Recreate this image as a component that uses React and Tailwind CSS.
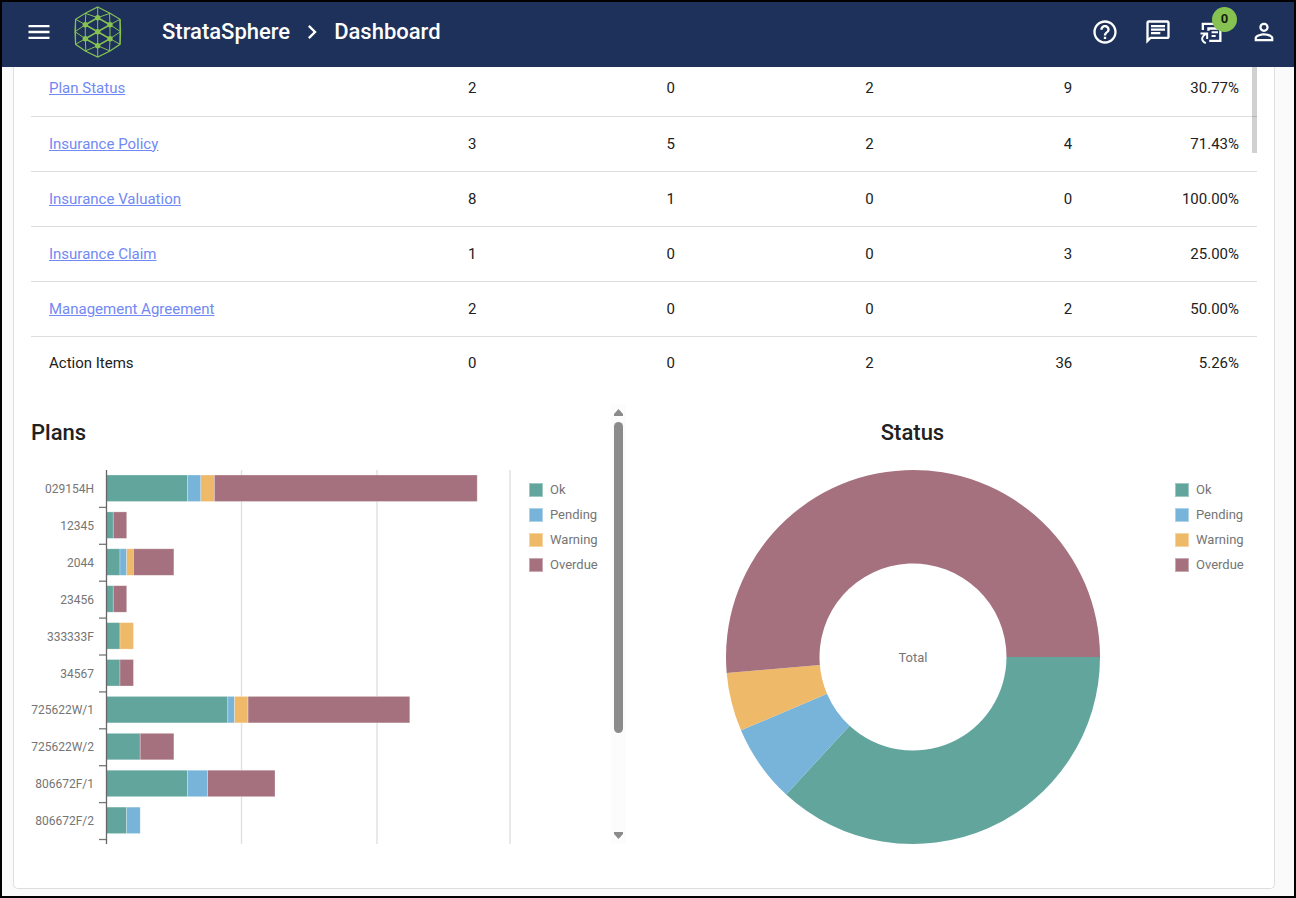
import React from "react";
import { MdMenu, MdHelpOutline, MdOutlineChat, MdPersonOutline, MdChevronRight } from "react-icons/md";

const STATUSES = [
  { label: "Ok", swatch: "bg-[#61a59d]", fill: "#61a59d" },
  { label: "Pending", swatch: "bg-[#78b4d9]", fill: "#78b4d9" },
  { label: "Warning", swatch: "bg-[#eeb969]", fill: "#eeb969" },
  { label: "Overdue", swatch: "bg-[#a5717f]", fill: "#a5717f" },
];

const ROWS = [
  ["Plan Status", 2, 0, 2, 9, "30.77%"],
  ["Insurance Policy", 3, 5, 2, 4, "71.43%"],
  ["Insurance Valuation", 8, 1, 0, 0, "100.00%"],
  ["Insurance Claim", 1, 0, 0, 3, "25.00%"],
  ["Management Agreement", 2, 0, 0, 2, "50.00%"],
  ["Action Items", 0, 0, 2, 36, "5.26%"],
];

const PLANS = [
  ["029154H", [12, 2, 2, 39]],
  ["12345", [1, 0, 0, 2]],
  ["2044", [2, 1, 1, 6]],
  ["23456", [1, 0, 0, 2]],
  ["333333F", [2, 0, 2, 0]],
  ["34567", [2, 0, 0, 2]],
  ["725622W/1", [18, 1, 2, 24]],
  ["725622W/2", [5, 0, 0, 5]],
  ["806672F/1", [12, 3, 0, 10]],
  ["806672F/2", [3, 2, 0, 0]],
];

function Logo() {
  const nodes = [[23.7, 11.7], [11.3, 18.7], [36, 18.7], [23.7, 25.7], [11.3, 32.7], [36, 32.7], [23.7, 39.7]];
  return (
    <svg viewBox="0 0 48 52" className="h-[52px] w-12" fill="none" stroke="#86c252" aria-label="StrataSphere logo">
      <path strokeWidth="1.2" d="M23.7 1 36 7.3 46 13.3 46.6 25.7 46 38.3 36 45 23.7 51 11.3 45 1.6 38.3 1 25.7 1.6 13.3 11.3 7.3Z" />
      <path
        strokeWidth="1"
        d="M23.7 1V51M11.8 7.3 11.3 18.7V32.7L11.8 45M35.5 7.3 36 18.7V32.7L35.5 45M1.6 13.3 11.3 18.7 1 25.7 11.3 32.7 1.6 38.3M46 13.3 36 18.7 46.6 25.7 36 32.7 46 38.3M11.3 7.3 23.7 11.7 36 7.3M11.3 45 23.7 39.7 36 45M1.6 13.3V38.3M46 13.3V38.3"
      />
      <path strokeWidth="1.6" d="M23.7 11.7 36 18.7 11.3 32.7 23.7 39.7 36 32.7 11.3 18.7Z" />
      {nodes.map(([x, y]) => (
        <circle key={`${x}-${y}`} cx={x} cy={y} r="2.7" fill="#86c252" stroke="none" />
      ))}
    </svg>
  );
}

function TransferIcon() {
  return (
    <svg viewBox="0 0 24 24" className="size-7" fill="none" stroke="currentColor" strokeWidth="2">
      <path d="M5 10.3V5H19" />
      <path d="M9.8 11V9H20V19.6H10.5" />
      <path strokeWidth="1.6" d="M12.5 12.2H18M12.5 15.4H16" />
      <path strokeWidth="1.7" d="M3 13.2H8.7V18M8.5 13.4C3.5 15.5 3 19.5 7.6 21.6" />
    </svg>
  );
}

function Legend() {
  return (
    <ul className="flex flex-col gap-[5px] text-[13px] leading-5 text-[#757575]">
      {STATUSES.map((s) => (
        <li key={s.label} className="flex items-center gap-[7px]">
          <span className={`size-[14px] border border-white/40 ${s.swatch}`} />
          {s.label}
        </li>
      ))}
    </ul>
  );
}

function PlansChart() {
  const step = 36.9;
  const unit = 6.74;
  const x0 = 75.5;
  return (
    <svg viewBox="0 0 490 376" className="h-[376px] w-[490px] shrink-0" role="img" aria-label="Plans by status">
      {[210.5, 346, 479].map((x) => (
        <line key={x} x1={x} x2={x} y1="1" y2="375" stroke="#e0e0e0" strokeWidth="1.4" />
      ))}
      {PLANS.map(([name, values], i) => {
        const y = 1 + i * step;
        let x = x0;
        return (
          <g key={name}>
            <text x="63" y={y + 23} textAnchor="end" fontSize="12" fill="#757575">
              {name}
            </text>
            {values.map((v, k) => {
              if (!v) return null;
              const left = x;
              x += v * unit;
              return (
                <rect key={k} x={left} y={y + 5} width={v * unit} height="26.5" fill={STATUSES[k].fill} stroke="#fff" strokeOpacity=".4" strokeWidth=".7" />
              );
            })}
            <line x1="68" x2="75" y1={y + step + 0.5} y2={y + step + 0.5} stroke="#777" strokeWidth="1.3" />
          </g>
        );
      })}
      <line x1={x0} x2={x0} y1="1" y2="375" stroke="#666" strokeWidth="1.3" />
    </svg>
  );
}

function StatusChart() {
  const angles = [0, 132.7, 156.9, 175.1, 360];
  const point = (r, deg) => {
    const t = (deg * Math.PI) / 180;
    return `${188 + r * Math.cos(t)} ${188 + r * Math.sin(t)}`;
  };
  return (
    <svg viewBox="0 0 376 376" className="size-[376px]" role="img" aria-label="Status totals">
      {STATUSES.map((s, i) => {
        const a = angles[i];
        const b = angles[i + 1];
        const large = b - a > 180 ? 1 : 0;
        return (
          <path
            key={s.label}
            fill={s.fill}
            d={`M${point(187, a)}A187 187 0 ${large} 1 ${point(187, b)}L${point(93.5, b)}A93.5 93.5 0 ${large} 0 ${point(93.5, a)}Z`}
          />
        );
      })}
      <text x="188" y="193" textAnchor="middle" fontSize="13" fill="#757575">
        Total
      </text>
    </svg>
  );
}

export default function App() {
  return (
    <div className="flex min-h-screen flex-col border-2 border-black bg-[#fafafa] font-[Roboto,sans-serif] text-[#212121]">
      <header className="flex h-[65px] items-center bg-[#1d315a] pr-4 pb-[6px] pl-[23px] text-white">
        <button aria-label="Menu"><MdMenu className="size-7" /></button>
        <div className="ml-[21px]"><Logo /></div>
        <nav className="ml-10 flex items-center text-[22px] leading-7 font-medium" aria-label="Breadcrumb">
          <a href="#home">StrataSphere</a>
          <MdChevronRight className="mx-2 size-7" />
          <a href="#dashboard">Dashboard</a>
        </nav>
        <div className="ml-auto flex items-center gap-[25px]">
          <button aria-label="Help"><MdHelpOutline className="size-7" /></button>
          <button aria-label="Messages"><MdOutlineChat className="size-7" /></button>
          <button aria-label="Transfers" className="relative">
            <TransferIcon />
            <span className="absolute -top-[11px] -right-3 flex size-[25px] items-center justify-center rounded-full bg-[#86c252] text-[13px] font-bold text-black/85">0</span>
          </button>
          <button aria-label="Account"><MdPersonOutline className="size-7" /></button>
        </div>
      </header>

      <main className="mr-[19px] mb-[7px] ml-[11px] flex-1 rounded-b-[5px] border border-t-0 border-[#dedede] bg-white px-[17px]">
        <div className="relative overflow-hidden">
          <table className="-mt-[6px] w-full table-fixed border-collapse text-[15px] leading-5">
            <colgroup>
              <col className="w-[37.8%]" />
              <col className="w-[16.2%]" />
              <col className="w-[16.2%]" />
              <col className="w-[16.2%]" />
              <col className="w-[13.6%]" />
            </colgroup>
            <tbody>
              {ROWS.map(([name, ok, pending, warning, overdue, pct]) => (
                <tr key={name} className="h-[55px] border-b border-[#dedede] last:h-[53px] last:border-0">
                  <td className="pl-[18px]">
                    <div className="flex">
                      <div className="flex-1">
                        {name === "Action Items" ? name : <a href="#details" className="text-[#7289f5] underline">{name}</a>}
                      </div>
                      <div className="pr-[18px]">{ok}</div>
                    </div>
                  </td>
                  {[pending, warning, overdue, pct].map((v, i) => (
                    <td key={i} className="pr-[18px] text-right">{v}</td>
                  ))}
                </tr>
              ))}
            </tbody>
          </table>
          <div className="absolute top-0 right-0 h-[86px] w-[5px] bg-black/18" />
        </div>

        <div className="mt-[15px] flex">
          <section className="flex h-[440px] w-[595px] shrink-0">
            <div className="flex-1">
              <h2 className="pt-[15px] text-[22px] leading-7 font-medium">Plans</h2>
              <div className="mt-[22px] flex gap-2">
                <PlansChart />
                <div className="pt-[11px]"><Legend /></div>
              </div>
            </div>
            <div className="flex w-[15px] flex-col items-center bg-[#fcfcfc] py-[5px]">
              <svg viewBox="0 0 9 7" className="h-[7px] w-[9px]" fill="#8b8b8b"><path d="M4.5 0 9 5V7H0V5Z" /></svg>
              <div className="mt-[6px] h-[311px] w-[9px] rounded-full bg-[#8b8b8b]" />
              <svg viewBox="0 0 9 7" className="mt-auto h-[7px] w-[9px]" fill="#8b8b8b"><path d="M4.5 7 9 2V0H0V2Z" /></svg>
            </div>
          </section>
          <section className="flex flex-1 justify-end pl-6">
            <div className="flex flex-1 flex-col items-center">
              <h2 className="pt-[15px] text-[22px] leading-7 font-medium">Status</h2>
              <div className="mt-[22px]"><StatusChart /></div>
            </div>
            <div className="w-[82px] shrink-0 pt-[76px]"><Legend /></div>
          </section>
        </div>
      </main>
    </div>
  );
}
